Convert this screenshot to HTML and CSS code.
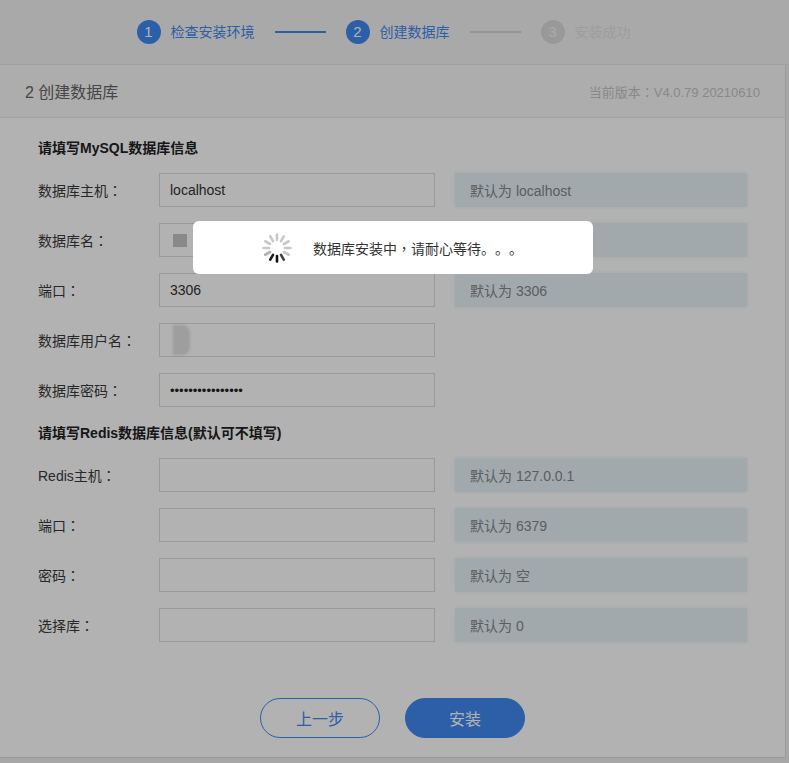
FILE: index.html
```html
<!DOCTYPE html>
<html lang="zh-CN">
<head>
    <meta charset="UTF-8">
    <meta name="viewport" content="width=device-width, initial-scale=1.0">
    <title>安装向导</title>
    <link rel="stylesheet" href="styles.css">
</head>
<body>
    <header class="steps">
        <div class="step done"><span class="num">1</span>检查安装环境</div>
        <span class="bar done"></span>
        <div class="step done"><span class="num">2</span>创建数据库</div>
        <span class="bar"></span>
        <div class="step"><span class="num">3</span>安装成功</div>
    </header>

    <main class="card">
        <div class="card-head">
            <span class="card-title">2 创建数据库</span>
            <span class="version">当前版本<span class="colon">：</span>V4.0.79 20210610</span>
        </div>
        <div class="card-body">
            <div class="group">
                <h3>请填写MySQL数据库信息</h3>
                <div class="row">
                    <label>数据库主机<span class="colon">：</span></label>
                    <div class="field">localhost</div>
                    <div class="hint">默认为 localhost</div>
                </div>
                <div class="row">
                    <label>数据库名<span class="colon">：</span></label>
                    <div class="field"><span class="mask-a"></span></div>
                    <div class="hint"></div>
                </div>
                <div class="row">
                    <label>端口<span class="colon">：</span></label>
                    <div class="field">3306</div>
                    <div class="hint">默认为 3306</div>
                </div>
                <div class="row">
                    <label>数据库用户名<span class="colon">：</span></label>
                    <div class="field"><span class="mask-b"></span></div>
                </div>
                <div class="row">
                    <label>数据库密码<span class="colon">：</span></label>
                    <div class="field pwd">••••••••••••••••</div>
                </div>

                <h3>请填写Redis数据库信息(默认可不填写)</h3>
                <div class="row">
                    <label>Redis主机<span class="colon">：</span></label>
                    <div class="field"></div>
                    <div class="hint">默认为 127.0.0.1</div>
                </div>
                <div class="row">
                    <label>端口<span class="colon">：</span></label>
                    <div class="field"></div>
                    <div class="hint">默认为 6379</div>
                </div>
                <div class="row">
                    <label>密码<span class="colon">：</span></label>
                    <div class="field"></div>
                    <div class="hint">默认为 空</div>
                </div>
                <div class="row">
                    <label>选择库<span class="colon">：</span></label>
                    <div class="field"></div>
                    <div class="hint">默认为 0</div>
                </div>
            </div>
            <div class="actions">
                <button class="btn btn-line">上一步</button>
                <button class="btn btn-main">安装</button>
            </div>
        </div>
    </main>

    <div class="shade"></div>
    <div class="toast">
        <svg class="spinner" width="32" height="32" viewBox="0 0 32 32">
            <g stroke-width="2.6" stroke-linecap="round">
                <line x1="16" y1="8" x2="16" y2="2.5" stroke="#c8c8c8"/>
                <line x1="16" y1="8" x2="16" y2="2.5" stroke="#c8c8c8" transform="rotate(30 16 16)"/>
                <line x1="16" y1="8" x2="16" y2="2.5" stroke="#c8c8c8" transform="rotate(60 16 16)"/>
                <line x1="16" y1="8" x2="16" y2="2.5" stroke="#c8c8c8" transform="rotate(90 16 16)"/>
                <line x1="16" y1="8" x2="16" y2="2.5" stroke="#c8c8c8" transform="rotate(120 16 16)"/>
                <line x1="16" y1="8" x2="16" y2="2.5" stroke="#444" transform="rotate(150 16 16)"/>
                <line x1="16" y1="8" x2="16" y2="2.5" stroke="#111" transform="rotate(180 16 16)"/>
                <line x1="16" y1="8" x2="16" y2="2.5" stroke="#1a1a1a" transform="rotate(210 16 16)"/>
                <line x1="16" y1="8" x2="16" y2="2.5" stroke="#b0b0b0" transform="rotate(240 16 16)"/>
                <line x1="16" y1="8" x2="16" y2="2.5" stroke="#c8c8c8" transform="rotate(270 16 16)"/>
                <line x1="16" y1="8" x2="16" y2="2.5" stroke="#c8c8c8" transform="rotate(300 16 16)"/>
                <line x1="16" y1="8" x2="16" y2="2.5" stroke="#c8c8c8" transform="rotate(330 16 16)"/>
            </g>
        </svg>
        <span>数据库安装中<span class="colon">，</span>请耐心等待。。。</span>
    </div>
</body>
</html>
```

FILE: styles.css
```css
* {
    box-sizing: border-box;
}
body {
    margin: 0;
    background: #f0f0f0;
    font-family: "Liberation Sans", "Noto Sans CJK SC", sans-serif;
    font-size: 14px;
    color: #333;
    text-spacing-trim: space-all;
}
.colon {
    font-family: "Noto Sans CJK TC", sans-serif;
    font-feature-settings: "locl" 0;
}
.steps {
    height: 65px;
    background: #f3f3f3;
    border-bottom: 1px solid #e6e6e6;
    display: flex;
    align-items: center;
    justify-content: center;
    padding-right: 22px;
    color: #e2e2e2;
}
.step {
    display: flex;
    align-items: center;
    gap: 10px;
    line-height: 20px;
}
.num {
    width: 24px;
    height: 24px;
    border-radius: 50%;
    background: #dcdcdc;
    color: #f3f3f3;
    display: flex;
    align-items: center;
    justify-content: center;
    font-size: 15px;
}
.step.done {
    color: #3f88f0;
}
.step.done .num {
    background: #3f88f0;
    color: #fff;
}
.bar {
    width: 51px;
    height: 2px;
    margin: 0 20px;
    background: #d6d6d6;
}
.bar.done {
    background: #3f88f0;
}
.card {
    width: 786px;
    background: #fff;
    border-right: 1px solid #dcdcdc;
    border-bottom: 1px solid #dcdcdc;
}
.card-head {
    height: 53px;
    background: #f8f8f8;
    border-bottom: 1px solid #e8e8e8;
    display: flex;
    align-items: center;
    justify-content: space-between;
    padding: 0 25px;
}
.card-title {
    font-size: 16px;
    color: #666;
}
.version {
    font-size: 13px;
    color: #c4c4c4;
}
.card-body {
    padding: 20px 0 19px;
}
.group {
    padding-left: 38px;
}
h3 {
    margin: 0 0 15px;
    font-size: 14px;
    line-height: 20px;
    color: #222;
}
.row {
    display: flex;
    align-items: center;
    margin-bottom: 16px;
}
.row label {
    width: 121px;
    color: #3a3a3a;
}
.field {
    width: 276px;
    height: 34px;
    border: 1px solid #dcdcdc;
    padding: 0 10px;
    display: flex;
    align-items: center;
    color: #333;
}
.pwd {
    font-size: 13px;
    color: #222;
}
.hint {
    width: 292px;
    height: 34px;
    margin-left: 20px;
    padding: 0 15px;
    background: #e9f2f6;
    box-shadow: 0 0 4px #e9f2f6;
    display: flex;
    align-items: center;
    color: #80878d;
}
.mask-a {
    width: 14px;
    height: 13px;
    margin-left: 3px;
    background: #c4c4c4;
    filter: blur(0.6px);
}
.mask-b {
    width: 17px;
    height: 30px;
    margin-left: 3px;
    background: #e2e2e2;
    border-radius: 0 8px 8px 0;
    filter: blur(1px);
}
.actions {
    display: flex;
    justify-content: center;
    gap: 25px;
    padding-top: 40px;
}
.btn {
    width: 120px;
    height: 40px;
    border-radius: 20px;
    font-family: "Liberation Sans", "Noto Sans CJK SC", sans-serif;
    font-size: 16px;
    cursor: pointer;
}
.btn-line {
    background: #fff;
    border: 1px solid #3f88f0;
    color: #3f88f0;
}
.btn-main {
    background: #3f88f0;
    border: 1px solid #3f88f0;
    color: #fff;
}
.shade {
    position: fixed;
    inset: 0;
    background: rgba(0, 0, 0, 0.3);
}
.toast {
    position: fixed;
    left: 193px;
    top: 221px;
    width: 400px;
    height: 53px;
    border-radius: 6px;
    background: #fff;
    display: flex;
    align-items: center;
    gap: 20px;
    padding-left: 68px;
    color: #333;
}
.spinner {
    display: block;
}
```
